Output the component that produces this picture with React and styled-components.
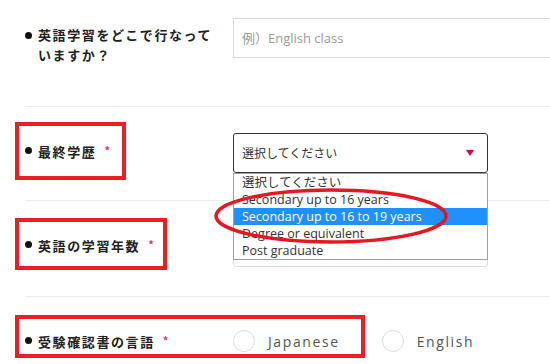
import React from "react";
import styled, { createGlobalStyle } from "styled-components";

const GlobalStyle = createGlobalStyle`
  body {
    margin: 0;
    background: #fff;
    overflow: hidden;
    font-family: "Open Sans", "Noto Sans CJK JP", sans-serif;
  }
`;

const options = [
  "選択してください",
  "Secondary up to 16 years",
  "Secondary up to 16 to 19 years",
  "Degree or equivalent",
  "Post graduate",
];

function App() {
  return (
    <>
      <GlobalStyle />
      <Page>
        <Row $pt={18} $pb={41}>
          <Label>
            <Bullet />
            <LabelText>英語学習をどこで行なっていますか？</LabelText>
          </Label>
          <TextInput placeholder="例）English class" />
        </Row>

        <Row>
          <Label>
            <Bullet />
            <LabelText>
              最終学歴<Required>*</Required>
            </LabelText>
          </Label>
          <SelectWrap>
            <SelectBox $focused>
              <span>選択してください</span>
              <Arrow />
            </SelectBox>
            <OptionList>
              {options.map((o, i) => (
                <Option key={o} $active={i === 2}>
                  {o}
                </Option>
              ))}
            </OptionList>
          </SelectWrap>
        </Row>

        <Row $pb={29}>
          <Label>
            <Bullet />
            <LabelText>
              英語の学習年数<Required>*</Required>
            </LabelText>
          </Label>
          <SelectWrap>
            <SelectBox />
          </SelectWrap>
        </Row>

        <Row>
          <Label>
            <Bullet />
            <LabelText>
              受験確認書の言語<Required>*</Required>
            </LabelText>
          </Label>
          <Radios>
            <RadioItem>
              <RadioCircle />
              <RadioText>Japanese</RadioText>
            </RadioItem>
            <RadioItem>
              <RadioCircle />
              <RadioText>English</RadioText>
            </RadioItem>
          </Radios>
        </Row>

        <Annotation $top={122} $left={15} $w={111} $h={58} />
        <Annotation $top={218} $left={15} $w={152} $h={52} />
        <Annotation $top={315} $left={15} $w={350} $h={43} />
        <Ellipse width="550" height="364" viewBox="0 0 550 364">
          <ellipse
            cx="331"
            cy="216"
            rx="115"
            ry="26"
            fill="none"
            stroke="#e8161f"
            strokeWidth="3.5"
          />
        </Ellipse>
      </Page>
    </>
  );
}

export default App;

const Page = styled.div`
  position: relative;
  width: 620px;
  height: 364px;
  overflow: hidden;
  padding-left: 25px;
  box-sizing: border-box;
`;

const Row = styled.div`
  display: flex;
  align-items: flex-start;
  padding-top: ${(p) => p.$pt ?? 26}px;
  padding-bottom: ${(p) => p.$pb ?? 27}px;
  border-bottom: 1px solid #ececec;
`;

const Label = styled.div`
  width: 208px;
  flex-shrink: 0;
  display: flex;
  align-items: flex-start;
  padding-top: 7px;
  padding-right: 18px;
  box-sizing: border-box;
`;

const Bullet = styled.span`
  width: 7px;
  height: 7px;
  border-radius: 50%;
  background: #111;
  margin-top: 7px;
  margin-right: 6px;
  flex-shrink: 0;
`;

const LabelText = styled.div`
  font-family: "Noto Sans CJK JP", sans-serif;
  font-weight: 700;
  font-size: 13px;
  line-height: 20px;
  letter-spacing: 1.6px;
  color: #222;
`;

const Required = styled.span`
  color: #e8335b;
  font-size: 11px;
  margin-left: 8px;
  vertical-align: 2px;
`;

const TextInput = styled.input`
  flex: 1;
  height: 40px;
  box-sizing: border-box;
  border: 1px solid #dcdcdc;
  padding: 0 8px;
  font-family: "Open Sans", "Noto Sans CJK JP", sans-serif;
  font-size: 13px;
  color: #333;
  outline: none;
  &::placeholder {
    color: #9a9a9a;
  }
`;

const SelectWrap = styled.div`
  position: relative;
  width: 255px;
`;

const SelectBox = styled.div`
  height: 40px;
  box-sizing: border-box;
  border: 1px solid ${(p) => (p.$focused ? "#333" : "#dcdcdc")};
  border-radius: 3px;
  display: flex;
  align-items: center;
  justify-content: space-between;
  padding: 0 13px 0 8px;
  font-size: 12px;
  color: #333;
`;

const Arrow = styled.span`
  width: 0;
  height: 0;
  border-left: 4px solid transparent;
  border-right: 4px solid transparent;
  border-top: 6px solid #e4003a;
`;

const OptionList = styled.ul`
  position: absolute;
  top: 40px;
  left: 0;
  right: 0;
  margin: 0;
  padding: 0;
  list-style: none;
  background: #fff;
  border: 1px solid #a0a0a0;
  z-index: 2;
`;

const Option = styled.li`
  height: 17px;
  line-height: 17px;
  padding-left: 8px;
  font-size: 12.5px;
  color: ${(p) => (p.$active ? "#fff" : "#333")};
  background: ${(p) => (p.$active ? "#1e90ff" : "transparent")};
  white-space: nowrap;
`;

const Radios = styled.div`
  display: flex;
  align-items: center;
  height: 40px;
  gap: 42px;
`;

const RadioItem = styled.label`
  display: flex;
  align-items: center;
  gap: 13px;
  margin-top: -4px;
`;

const RadioCircle = styled.span`
  width: 20px;
  height: 20px;
  border-radius: 50%;
  border: 1px solid #dcdcdc;
  background: #fff;
`;

const RadioText = styled.span`
  font-size: 14px;
  letter-spacing: 1.6px;
  color: #555;
`;

const Annotation = styled.div`
  position: absolute;
  top: ${(p) => p.$top}px;
  left: ${(p) => p.$left}px;
  width: ${(p) => p.$w}px;
  height: ${(p) => p.$h}px;
  box-sizing: border-box;
  border: 4px solid #ee1c25;
  pointer-events: none;
  z-index: 3;
`;

const Ellipse = styled.svg`
  position: absolute;
  top: 0;
  left: 0;
  pointer-events: none;
  z-index: 4;
`;
